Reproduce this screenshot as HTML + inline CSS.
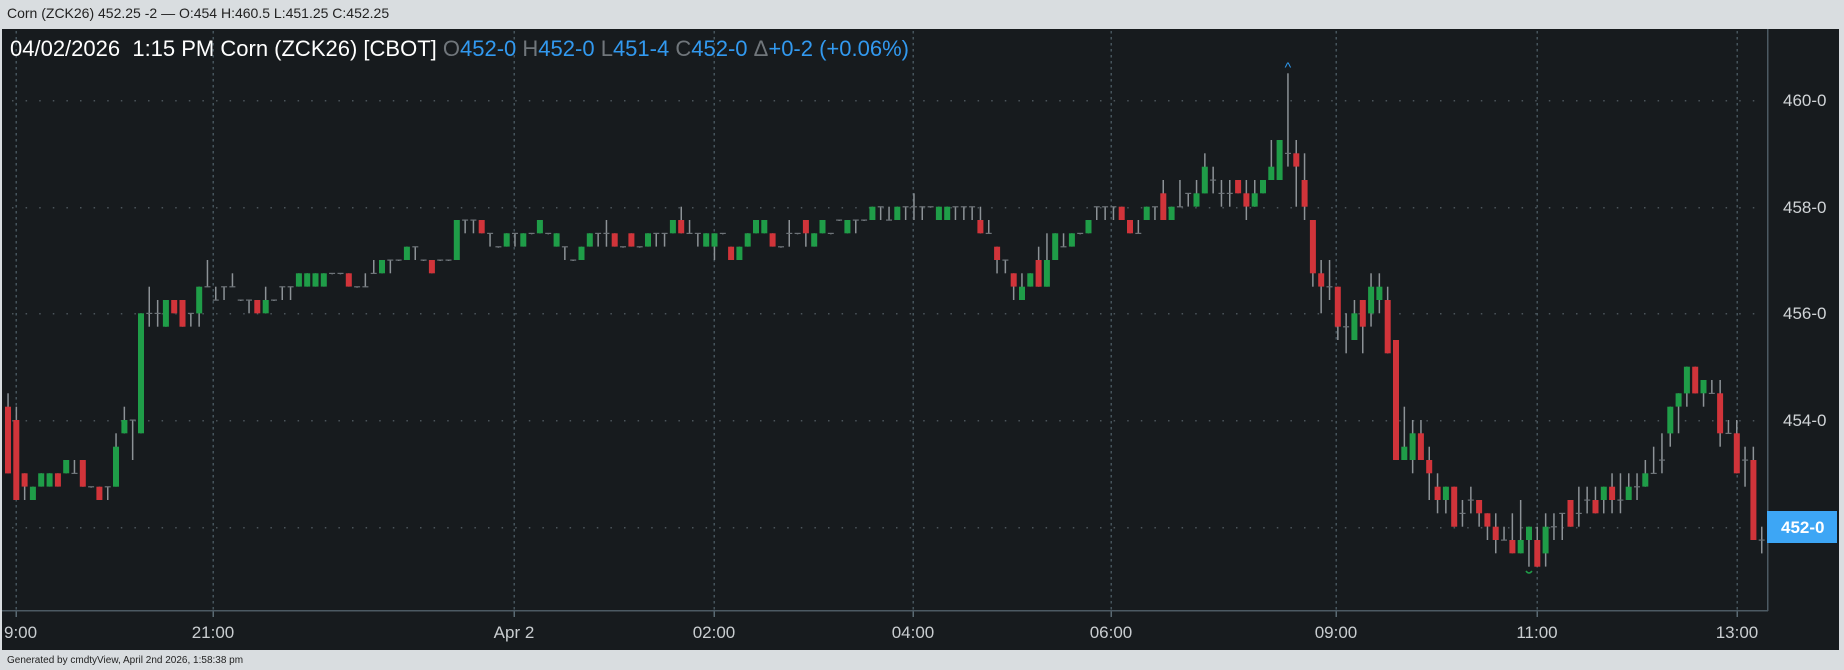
<!DOCTYPE html>
<html><head><meta charset="utf-8"><style>
html,body{margin:0;padding:0;background:#d9dde0;width:1844px;height:670px;overflow:hidden;font-family:"Liberation Sans",sans-serif}
#top{position:absolute;left:7px;top:5px;font-size:14px;color:#222;white-space:pre}
#foot{position:absolute;left:7px;top:655px;font-size:10px;color:#222;white-space:pre}
#dark{position:absolute;left:2px;top:29px;width:1837px;height:621px;background:#171b1e}
svg{position:absolute;left:0;top:0}
#title{position:absolute;left:10px;top:36px;font-size:22px;color:#fff;white-space:pre}
.g{color:#70767b}.b{color:#3299ef}
</style></head><body>
<div id="top">Corn (ZCK26) 452.25 -2 — O:454 H:460.5 L:451.25 C:452.25</div>
<div id="dark"></div>
<svg id="s" width="1844" height="670" xmlns="http://www.w3.org/2000/svg"></svg>
<div id="title">04/02/2026  1:15 PM Corn (ZCK26) [CBOT] <span class="g">O</span><span class="b">452-0</span> <span class="g">H</span><span class="b">452-0</span> <span class="g">L</span><span class="b">451-4</span> <span class="g">C</span><span class="b">452-0</span> <span class="g">Δ</span><span class="b">+0-2 (+0.06%)</span></div>
<div id="foot">Generated by cmdtyView, April 2nd 2026, 1:58:38 pm</div>
<script>
var D=[[23,28,22,28],[24,30,23,30],[28,29,28,30],[30,29,29,30],[29,28,28,29],[29,28,28,29],[28,29,28,29],[28,27,27,28],[28,28,27,28],[27,29,27,29],[29,29,29,29],[29,30,29,30],[29,29,29,30],[29,26,25,29],[25,24,23,25],[24,24,24,27],[25,16,16,25],[16,16,14,17],[16,16,15,17],[17,15,15,17],[15,16,15,16],[15,17,15,17],[16,16,16,17],[16,14,14,17],[14,14,12,14],[15,15,14,15],[14,14,14,15],[14,14,13,14],[15,15,15,15],[15,15,15,16],[15,16,15,16],[16,15,14,16],[15,15,15,15],[14,14,14,15],[14,14,14,15],[14,13,13,14],[14,13,13,14],[14,13,13,14],[14,13,13,14],[13,13,13,13],[13,13,13,13],[13,14,13,14],[14,14,14,14],[14,14,13,14],[13,13,12,13],[13,12,12,13],[12,12,12,13],[12,12,12,12],[12,11,11,12],[11,11,11,12],[12,12,12,12],[12,13,12,13],[12,12,12,12],[12,12,12,12],[12,9,9,12],
[9,9,9,10],[9,9,9,10],[9,10,9,10],[10,10,10,11],[11,11,11,11],[11,10,10,11],[10,10,10,11],[11,10,10,11],[10,10,10,10],[10,9,9,10],[10,10,10,10],[11,10,10,11],[11,11,11,12],[12,12,12,12],[12,11,11,12],[11,10,10,11],[10,10,10,11],[10,10,9,11],[10,11,10,11],[11,11,11,11],[10,11,10,11],[11,11,11,11],[11,10,10,11],[10,10,10,11],[10,10,10,11],[10,9,9,10],[9,10,8,10],[10,10,9,10],[10,10,10,11],[11,10,10,11],[11,10,10,12],[10,10,10,10],[11,12,11,12],[12,11,11,12],[11,10,10,11],[10,9,9,10],[10,9,9,10],[10,11,10,11],[11,11,11,11],[10,10,9,11],[10,10,10,10],[9,10,9,11],[11,10,10,11],[10,9,9,10],[10,10,10,10],[9,9,9,9],[10,9,9,10],[9,9,9,10],[9,9,9,9],[9,8,8,9],[8,8,8,9],[9,9,8,9],[9,8,8,9],[8,8,8,9],[8,8,7,9],[8,8,8,9],[8,8,8,8],[9,8,8,9],[9,8,8,9],[8,8,8,9],[8,8,8,9],[8,8,8,9],[9,10,8,10],[10,10,9,10],[11,12,11,13],
[12,12,12,13],[13,14,13,15],[15,14,13,15],[14,13,13,14],[12,14,11,14],[14,12,10,14],[12,10,10,12],[11,11,10,11],[11,10,10,11],[10,10,10,10],[10,9,9,10],[8,8,8,9],[8,8,8,9],[8,8,8,9],[8,9,8,9],[9,10,9,10],[10,10,9,10],[9,8,8,9],[8,8,8,9],[7,9,6,9],[9,8,8,9],[8,8,6,8],[7,7,7,8],[8,7,6,8],[7,5,4,7],[6,6,5,7],[7,7,6,8],[7,7,6,8],[6,7,6,7],[7,8,6,9],[8,7,6,8],[7,6,6,7],[6,5,3,6],[6,3,3,6],[4,4,-2,5],[4,5,3,8],[6,8,4,9],
[9,13,9,14],[13,14,12,16],[14,14,12,15],[14,17,14,18],[17,17,16,19],[18,16,15,18],[15,17,15,19],[16,14,13,17],[15,14,13,16],[15,19,14,19],[18,27,18,27],[27,26,23,27],[27,25,24,28],[25,27,24,27],[27,28,26,30],[29,30,28,31],[30,29,29,31],[29,32,29,32],[31,31,30,32],[30,30,29,31],[30,31,30,32],[31,32,31,33],[32,33,31,34],[33,33,32,33],[33,34,31,34],[34,33,30,34],[33,32,32,35],[33,35,32,35],[34,32,31,35],[32,32,31,33],[31,31,31,33],[30,32,30,32],[31,31,29,32],[30,30,29,31],[30,31,29,31],[30,29,29,31],[29,30,28,31],[30,30,28,31],[30,29,28,30],[29,29,28,30],[29,28,27,29],[28,28,26,28],[27,27,25,28],[25,23,23,26],[23,22,22,25],[22,20,20,23],[20,22,20,22],[22,21,21,23],[22,22,21,22],[22,25,21,26],[25,25,24,25],[25,28,24,28],[27,27,26,29],[27,33,26,33],[33,33,32,34]];
var h='',Y=function(k){return 100+k*13.333};
[100,207,313,420,527].forEach(function(y){for(var x=12;x<1765;x+=13.6)h+='<rect x="'+x.toFixed(1)+'" y="'+y+'" width="1.5" height="1.5" fill="#4b545a"/>';});
[16,213,514,714,913,1111,1336,1537,1737].forEach(function(x){for(var y=31;y<608;y+=6)h+='<rect x="'+(x-0.5)+'" y="'+y+'" width="1.5" height="2.5" fill="#46545c"/>';h+='<rect x="'+(x-0.5)+'" y="610" width="1.5" height="7" fill="#5a6a73"/>';});
h+='<rect x="1767" y="29" width="1.5" height="582" fill="#4c5a63"/><rect x="2" y="610" width="1766" height="1.5" fill="#4c5a63"/>';
var sp=(1761.7-8)/211;
D.forEach(function(c,i){var x=8+sp*i,o=c[0],cl=c[1];
 h+='<rect x="'+(x-0.75).toFixed(1)+'" y="'+Y(c[2]).toFixed(1)+'" width="1.5" height="'+Math.max(1,Y(c[3])-Y(c[2])).toFixed(1)+'" fill="#8c9296"/>';
 if(o==cl){h+='<rect x="'+(x-3).toFixed(1)+'" y="'+(Y(o)-0.5).toFixed(1)+'" width="6" height="1.2" fill="#6d7378"/>';}
 else{var t=Math.min(o,cl),b=Math.max(o,cl);h+='<rect x="'+(x-3).toFixed(1)+'" y="'+Y(t).toFixed(1)+'" width="6" height="'+(Y(b)-Y(t)).toFixed(1)+'" fill="'+(cl<o?'#1f9d48':'#d1343a')+'"/>';}
});
h+='<text x="'+(8+sp*154)+'" y="72" fill="#2f9bf0" font-size="14" text-anchor="middle" font-family="Liberation Sans">^</text>';
h+='<path d="M'+(8+sp*183-3)+' 571 q3 4 6 0" stroke="#1f9d48" stroke-width="1.5" fill="none"/>';
var lab=[['9:00',16,'start'],['21:00',213],['Apr 2',514],['02:00',714],['04:00',913],['06:00',1111],['09:00',1336],['11:00',1537],['13:00',1737]];
lab.forEach(function(l){h+='<text x="'+(l[2]?4:l[1])+'" y="638" fill="#c9cdd0" font-size="17" text-anchor="'+(l[2]||'middle')+'" font-family="Liberation Sans">'+l[0]+'</text>';});
[['460-0',100],['458-0',207],['456-0',313],['454-0',420]].forEach(function(l){h+='<text x="1783" y="'+(l[1]+6)+'" fill="#d0d4d7" font-size="17" font-family="Liberation Sans">'+l[0]+'</text>';});
h+='<rect x="1767" y="511" width="70" height="32" fill="#3da6f5"/><text x="1781" y="533" fill="#fff" font-size="17" font-weight="bold" font-family="Liberation Sans">452-0</text>';
document.getElementById('s').innerHTML=h;
</script>
</body></html>
